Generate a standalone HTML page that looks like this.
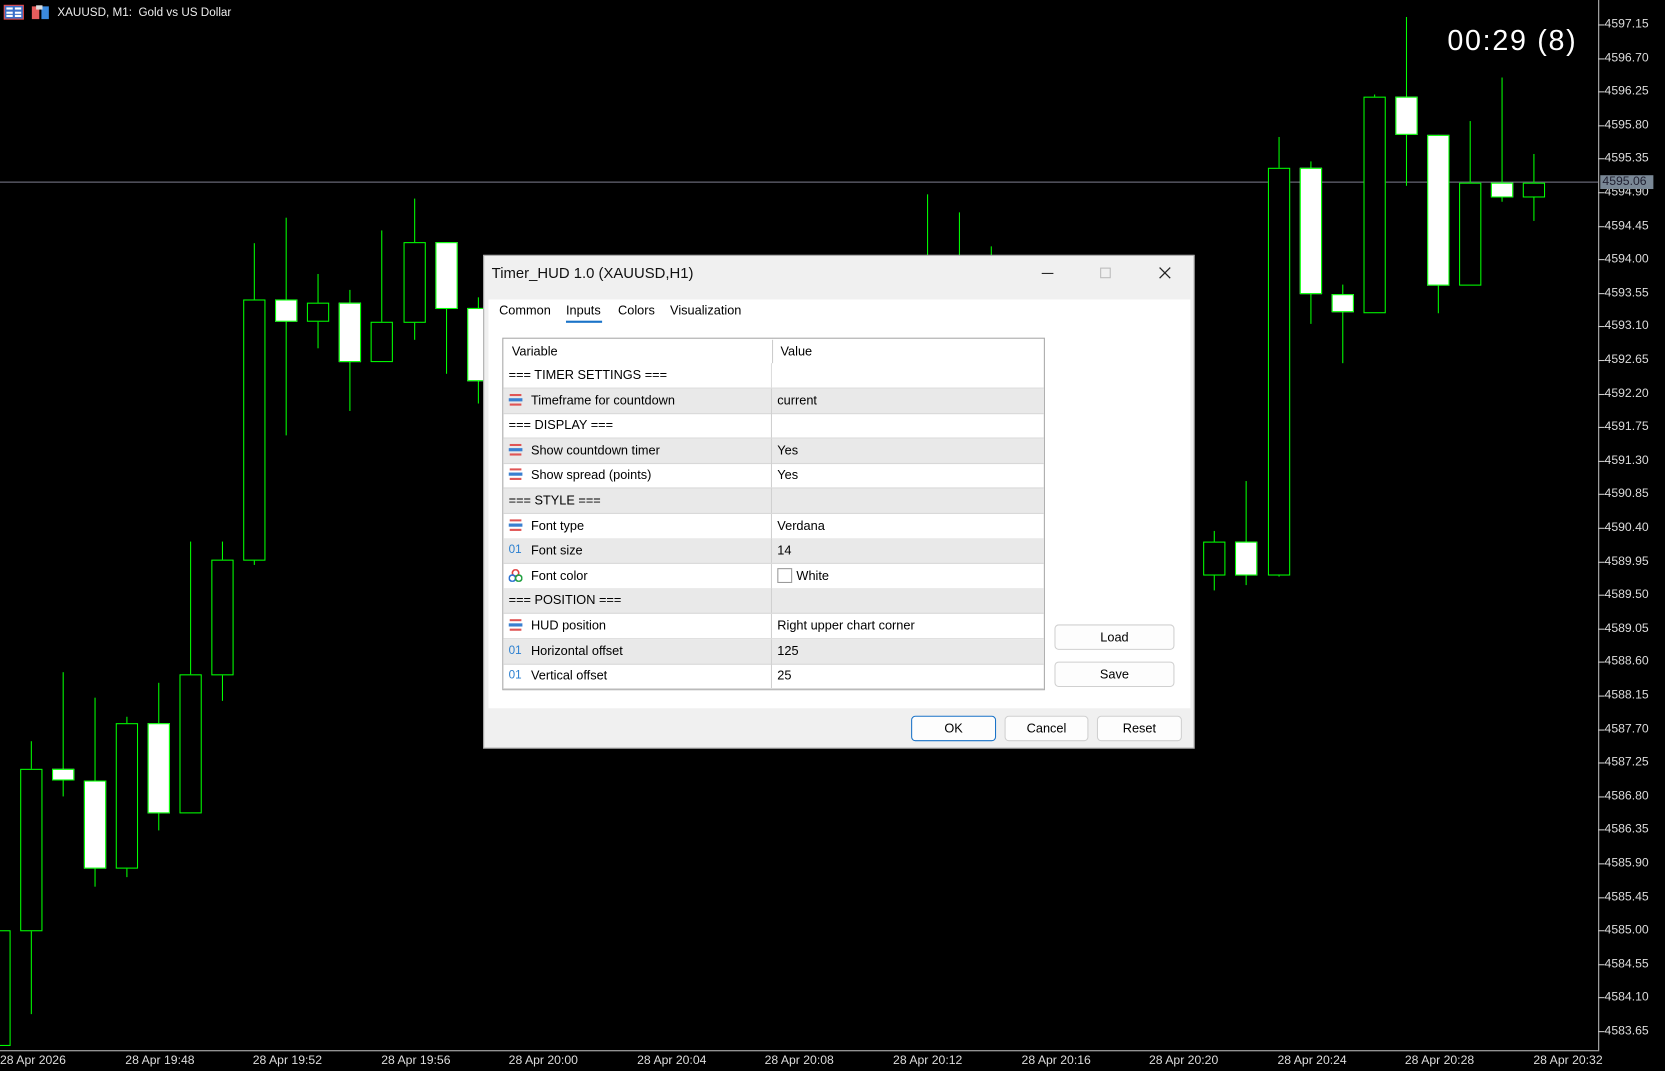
<!DOCTYPE html>
<html><head><meta charset="utf-8"><style>
*{margin:0;padding:0;box-sizing:border-box}
html,body{width:1665px;height:1071px;background:#000;overflow:hidden}
#w{position:absolute;left:0;top:0;width:1568px;height:1009px;transform:scale(1.0619);transform-origin:0 0;font-family:"Liberation Sans",sans-serif;color:#000}
.a{position:absolute}
.pl{position:absolute;left:1505px;width:6px;height:1px;background:#ccc}
.pt{position:absolute;left:1511px;font-size:11.5px;color:#ddd;line-height:12px}
.tl{position:absolute;top:993px;font-size:11.5px;color:#ddd}
.w{position:absolute;width:1px;background:#0f0}
.b{position:absolute;width:21px;border:1px solid #0f0}
.row{position:absolute;left:474px;width:509px;height:24px;border-bottom:1px solid #d8d8d8;font-size:12px;line-height:23px}
.row .v{position:absolute;left:0;width:253px;height:23px;border-right:1px solid #d0d0d0}
.row .val{position:absolute;left:258px}
.g{background:#e9e9e9}
.ic{position:absolute;left:5px;top:5px;width:13px;height:12px}
.lbl{position:absolute;left:26px}
.btn{position:absolute;height:24px;background:#fdfdfd;border:1px solid #d0d0d0;border-radius:4px;font-size:12px;text-align:center;line-height:22px}
</style></head><body><div id="w">
<svg class="a" style="left:3px;top:4px" width="44" height="16">
<rect x="1" y="1" width="18" height="13" fill="#3a6fc8" stroke="#e84b4b"/><rect x="3" y="3" width="6" height="2" fill="#fff"/><rect x="11" y="3" width="6" height="2" fill="#fff"/><rect x="3" y="7" width="6" height="2" fill="#fff"/><rect x="11" y="7" width="6" height="2" fill="#fff"/><rect x="3" y="10" width="6" height="2" fill="#fff"/><rect x="11" y="10" width="6" height="2" fill="#fff"/>
<rect x="27" y="2" width="7" height="12" fill="#e85c5c"/><rect x="36" y="2" width="7" height="12" fill="#3a8ae0"/><rect x="31" y="1" width="6" height="4" fill="#ddd"/>
</svg>
<div class="a" style="left:54px;top:6px;font-size:11px;color:#eee">XAUUSD, M1:&nbsp; Gold vs US Dollar</div>
<div class="a" style="left:1363px;top:23px;font-size:27px;color:#fff;letter-spacing:1.6px">00:29 (8)</div>
<div class="a" style="left:1505px;top:0;width:1px;height:989px;background:#bbb"></div>
<div class="a" style="left:0;top:989px;width:1506px;height:1px;background:#bbb"></div>
<div class="a" style="left:0;top:171px;width:1505px;height:1px;background:#778"></div>
<div id="prices"></div>
<div class="a" style="left:1507px;top:165px;width:50px;height:13px;background:#7a8896;font-size:11.5px;line-height:13px;color:#223;padding-left:2px">4595.06</div>
<div class="tl" style="left:0">28 Apr 2026</div>
<div class="tl" style="left:118px">28 Apr 19:48</div>
<div class="tl" style="left:238px">28 Apr 19:52</div>
<div class="tl" style="left:359px">28 Apr 19:56</div>
<div class="tl" style="left:479px">28 Apr 20:00</div>
<div class="tl" style="left:600px">28 Apr 20:04</div>
<div class="tl" style="left:720px">28 Apr 20:08</div>
<div class="tl" style="left:841px">28 Apr 20:12</div>
<div class="tl" style="left:962px">28 Apr 20:16</div>
<div class="tl" style="left:1082px">28 Apr 20:20</div>
<div class="tl" style="left:1203px">28 Apr 20:24</div>
<div class="tl" style="left:1323px">28 Apr 20:28</div>
<div class="tl" style="left:1444px">28 Apr 20:32</div>
<div id="candles"></div>
<script>
var p=[4597.15,4596.70,4596.25,4595.80,4595.35,4594.90,4594.45,4594.00,4593.55,4593.10,4592.65,4592.20,4591.75,4591.30,4590.85,4590.40,4589.95,4589.50,4589.05,4588.60,4588.15,4587.70,4587.25,4586.80,4586.35,4585.90,4585.45,4585.00,4584.55,4584.10,4583.65];
var h='';p.forEach(function(v,i){var y=23+i*31.6;h+='<div class="pl" style="top:'+Math.round(y)+'px"></div><div class="pt" style="top:'+Math.round(y-6)+'px">'+v.toFixed(2)+'</div>';});
document.getElementById('prices').innerHTML=h;
var c=[[-1,876,984,876,984,0],[29,724,876,698,955,0],[59,724,734,633,750,1],[89,735,817,657,835,1],[119,681,817,675,826,0],[149,681,765,643,782,1],[179,635,765,510,765,0],[209,527,635,510,660,0],[239,282,527,229,532,0],[269,282,302,205,410,1],[299,285,302,258,328,0],[329,285,340,273,387,1],[359,303,340,217,340,0],[390,228,303,187,320,0],[420,228,290,228,352,1],[450,290,358,280,380,1],[873,240,245,183,245,0],[903,240,245,200,245,0],[933,240,245,232,245,0],[1143,510,541,500,556,0],[1173,510,541,453,551,1],[1204,158,541,129,543,0],[1234,158,276,152,305,1],[1264,277,293,268,342,1],[1294,91,294,89,294,0],[1324,91,126,16,175,1],[1354,127,268,127,295,1],[1384,172,268,114,268,0],[1414,172,185,73,190,1],[1444,172,185,145,208,0]];
h='';c.forEach(function(d){var x=d[0];h+='<div class="w" style="left:'+x+'px;top:'+d[3]+'px;height:'+(d[4]-d[3])+'px"></div>';if(d[0]<800||d[0]>1100)h+='<div class="b" style="left:'+(x-10)+'px;top:'+d[1]+'px;height:'+(d[2]-d[1]+1)+'px;background:'+(d[5]?'#fff':'#000')+'"></div>';});
document.getElementById('candles').innerHTML=h;
</script>
<div class="a" style="left:455px;top:240px;width:670px;height:465px;background:#f0f0f0;border:1px solid #aaa"></div>
<div class="a" style="left:463px;top:249px;font-size:14px;color:#111">Timer_HUD 1.0 (XAUUSD,H1)</div>
<div class="a" style="left:981px;top:257px;width:11px;height:1px;background:#222"></div>
<div class="a" style="left:1036px;top:252px;width:10px;height:10px;border:1px solid #bbb"></div>
<svg class="a" style="left:1091px;top:251px" width="12" height="12"><path d="M1 1L11 11M11 1L1 11" stroke="#222" stroke-width="1.2"/></svg>
<div class="a" style="left:460px;top:282px;width:661px;height:385px;background:#fff"></div>
<div class="a" style="left:470px;top:285px;font-size:12px">Common</div>
<div class="a" style="left:533px;top:285px;font-size:12px">Inputs</div>
<div class="a" style="left:582px;top:285px;font-size:12px">Colors</div>
<div class="a" style="left:631px;top:285px;font-size:12px">Visualization</div>
<div class="a" style="left:533px;top:302px;width:34px;height:2px;background:#1a73c8"></div>
<div class="a" style="left:473px;top:318px;width:511px;height:332px;border:1px solid #a8a8a8;background:#fff"></div>
<div class="a" style="left:727px;top:320px;width:1px;height:22px;background:#ccc"></div>
<div class="a" style="left:482px;top:324px;font-size:12px">Variable</div>
<div class="a" style="left:735px;top:324px;font-size:12px">Value</div>
<div id="rows"></div>
<script>
var en='<svg class="ic" viewBox="0 0 13 12"><rect x="1" y="0" width="11" height="2" fill="#e05555"/><rect x="0" y="4" width="13" height="3" fill="#3a7fd0"/><rect x="1" y="9" width="11" height="2" fill="#e05555"/></svg>';
var nm='<span style="position:absolute;left:5px;font-size:11px;color:#2a7fd0">01</span>';
var co='<svg class="ic" viewBox="0 0 13 12"><circle cx="6.5" cy="3.5" r="3" fill="none" stroke="#e04040" stroke-width="1.5"/><circle cx="3.5" cy="8.5" r="3" fill="none" stroke="#2a70d0" stroke-width="1.5"/><circle cx="9.5" cy="8.5" r="3" fill="none" stroke="#20a040" stroke-width="1.5"/></svg>';
var r=[['s','=== TIMER SETTINGS ===',''],[en,'Timeframe for countdown','current'],['s','=== DISPLAY ===',''],[en,'Show countdown timer','Yes'],[en,'Show spread (points)','Yes'],['s','=== STYLE ===',''],[en,'Font type','Verdana'],[nm,'Font size','14'],[co,'Font color','<span style="display:inline-block;width:14px;height:14px;border:1px solid #999;vertical-align:-3px;margin-right:4px;background:#fff"></span>White'],['s','=== POSITION ===',''],[en,'HUD position','Right upper chart corner'],[nm,'Horizontal offset','125'],[nm,'Vertical offset','25']];
var h='';r.forEach(function(d,i){var y=342+i*23.6;h+='<div class="row'+(i%2?' g':'')+'" style="top:'+y+'px"><div class="v"'+(i==0?' style="border-right-color:#ddd"':'')+'>'+(d[0]=='s'?'<span style="position:absolute;left:5px">'+d[1]+'</span>':d[0]+'<span class="lbl">'+d[1]+'</span>')+'</div><span class="val">'+d[2]+'</span></div>';});
document.getElementById('rows').innerHTML=h;
</script>
<div class="btn" style="left:993px;top:588px;width:113px">Load</div>
<div class="btn" style="left:993px;top:623px;width:113px">Save</div>
<div class="btn" style="left:858px;top:674px;width:80px;border-color:#1a73c8">OK</div>
<div class="btn" style="left:946px;top:674px;width:79px">Cancel</div>
<div class="btn" style="left:1033px;top:674px;width:80px">Reset</div>
</div></body></html>
